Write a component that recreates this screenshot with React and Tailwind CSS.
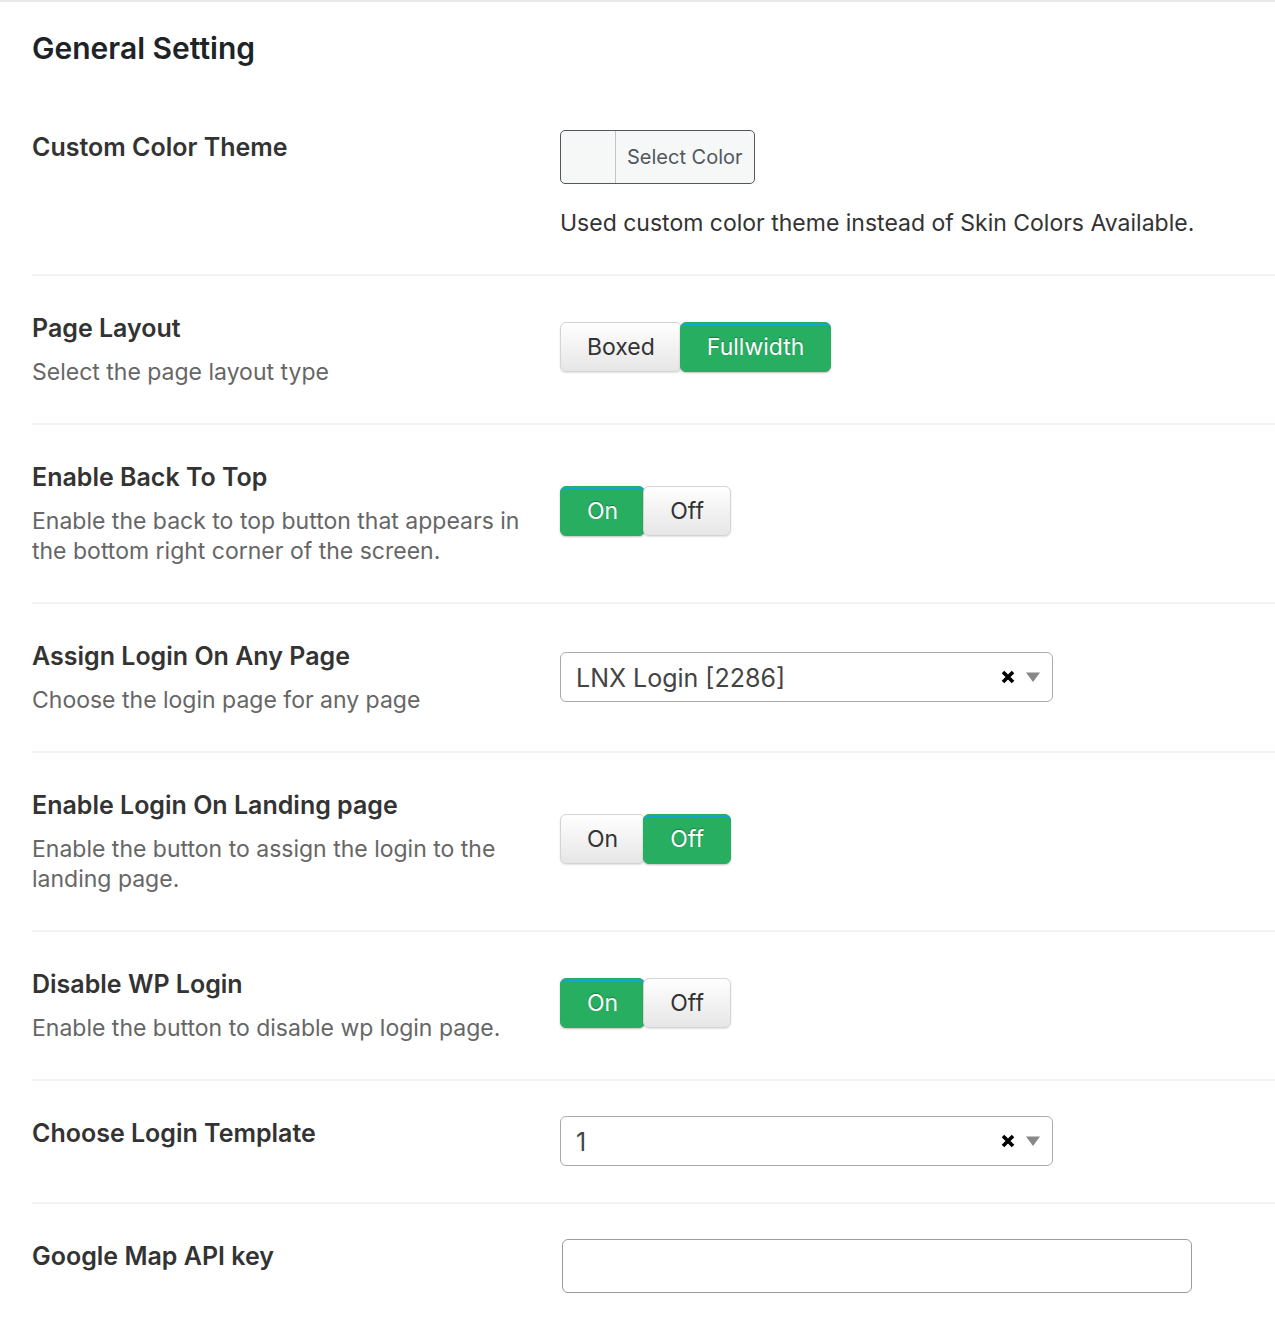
import { useState } from "react";

function Row({ title, description, htmlFor, top = false, last = false, children }) {
  const Title = htmlFor ? "label" : "h3";
  return (
    <section
      className={`grid grid-cols-[528px_minmax(0,1fr)] pt-[35px] pb-9 ${top ? "items-start" : "items-center"} ${
        last ? "" : "border-b-2 border-[#f3f3f3]"
      }`}
    >
      <div className="self-start pr-8">
        <Title htmlFor={htmlFor} className="block text-[25px] leading-[34px] font-semibold text-[#333]">
          {title}
        </Title>
        {description && <p className="mt-3 text-[23px] leading-[30px] text-[#666]">{description}</p>}
      </div>
      <div>{children}</div>
    </section>
  );
}

function ButtonSet({ label, options, initial }) {
  const [value, setValue] = useState(initial);
  return (
    <div role="group" aria-label={label} className="mb-1 flex">
      {options.map((option) => (
        <button
          key={option}
          type="button"
          aria-pressed={value === option}
          onClick={() => setValue(option)}
          className={`h-[50px] rounded-md border px-[26px] text-[23px] leading-[30px] not-first:-ml-0.5 ${
            value === option
              ? "border-[#27ae60] bg-[#27ae60] text-white shadow-[inset_0_2px_0_#0fa6d8,0_1px_2px_rgba(0,0,0,0.25)] [text-shadow:0_-1px_1px_rgba(0,0,0,0.3)]"
              : "border-[#d4d4d4] bg-linear-to-b from-white to-[#e6e6e6] text-[#333] shadow-[0_1px_2px_rgba(0,0,0,0.12)]"
          }`}
        >
          {option}
        </button>
      ))}
    </div>
  );
}

function SelectBox({ id, option }) {
  const [value, setValue] = useState(option);
  return (
    <div className="relative max-w-[493px]">
      <select
        id={id}
        value={value}
        onChange={(e) => setValue(e.target.value)}
        className="block h-[50px] w-full appearance-none rounded-md border border-[#aaa] bg-white pt-1 pr-20 pl-[15px] text-[25px] text-[#444]"
      >
        <option value=""></option>
        <option value={option}>{option}</option>
      </select>
      <button
        type="button"
        aria-label="Clear selection"
        onClick={() => setValue("")}
        className="absolute top-[18px] right-[38px]"
      >
        <svg width="14" height="14" viewBox="0 0 14 14" className="block">
          <path d="M2 2l10 10M12 2L2 12" stroke="#000" strokeWidth="3.6" />
        </svg>
      </button>
      <svg
        width="14"
        height="10"
        viewBox="0 0 14 10"
        aria-hidden="true"
        className="pointer-events-none absolute top-5 right-[13px]"
      >
        <path d="M0 0.5h14L7 10z" fill="#888" />
      </svg>
    </div>
  );
}

export default function App() {
  return (
    <main className="min-h-screen border-t-2 border-[#e8e8e8] bg-white pl-8 font-['Inter',sans-serif]">
      <h2 className="pt-[26px] text-[30px] leading-10 font-semibold text-[#1d2327]">General Setting</h2>
      <div className="pt-[27px]">
        <Row title="Custom Color Theme" top>
          <button
            type="button"
            className="flex h-[54px] overflow-hidden rounded-[5px] border border-[#50575e] bg-[#f6f7f7] text-[20px] text-[#50575e]"
          >
            <span className="h-full w-[55px] border-r border-[#c3c4c7]" />
            <span className="self-center px-[11px]">Select Color</span>
          </button>
          <p className="mt-6 text-[23px] leading-[30px] text-[#333]">
            Used custom color theme instead of Skin Colors Available.
          </p>
        </Row>
        <Row title="Page Layout" description="Select the page layout type">
          <ButtonSet label="Page Layout" options={["Boxed", "Fullwidth"]} initial="Fullwidth" />
        </Row>
        <Row
          title="Enable Back To Top"
          description="Enable the back to top button that appears in the bottom right corner of the screen."
        >
          <ButtonSet label="Enable Back To Top" options={["On", "Off"]} initial="On" />
        </Row>
        <Row
          title="Assign Login On Any Page"
          description="Choose the login page for any page"
          htmlFor="login-page"
        >
          <SelectBox id="login-page" option="LNX Login [2286]" />
        </Row>
        <Row
          title="Enable Login On Landing page"
          description="Enable the button to assign the login to the landing page."
        >
          <ButtonSet label="Enable Login On Landing page" options={["On", "Off"]} initial="Off" />
        </Row>
        <Row title="Disable WP Login" description="Enable the button to disable wp login page.">
          <ButtonSet label="Disable WP Login" options={["On", "Off"]} initial="On" />
        </Row>
        <Row title="Choose Login Template" htmlFor="login-template">
          <SelectBox id="login-template" option="1" />
        </Row>
        <Row title="Google Map API key" htmlFor="map-key" last>
          <div className="px-0.5">
            <input
              id="map-key"
              type="text"
              className="block h-[54px] w-full max-w-[630px] rounded-md border border-[#9a9ca1] bg-white px-4 text-[23px] text-[#333]"
            />
          </div>
        </Row>
      </div>
    </main>
  );
}
